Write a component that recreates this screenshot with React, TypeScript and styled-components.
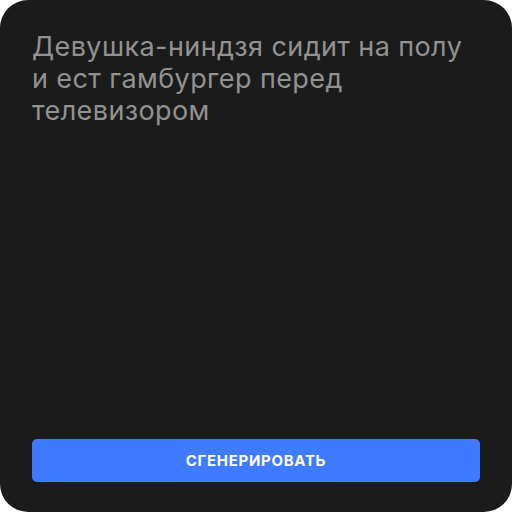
import React from "react";
import styled, { createGlobalStyle } from "styled-components";

const GlobalStyle = createGlobalStyle`
    html, body {
        margin: 0;
        padding: 0;
        background: #ffffff;
    }
    * {
        box-sizing: border-box;
    }
`

export default function App() {
    return (
        <>
            <GlobalStyle />
            <Card>
                <Prompt>Девушка-ниндзя сидит на полу и ест гамбургер перед телевизором</Prompt>
                <GenerateButton type="button">Сгенерировать</GenerateButton>
            </Card>
        </>
    );
}

const Card = styled.div`
    width: 512px;
    height: 512px;
    background: #1b1b1b;
    border-radius: 28px;
    padding: 31px 32px 30px 32px;
    display: flex;
    flex-direction: column;
    justify-content: space-between;
`

const Prompt = styled.p`
    margin: 0;
    font-family: Inter, "Noto Sans", sans-serif;
    font-size: 27px;
    line-height: 32px;
    color: #929292;
    letter-spacing: 0.4px;
`

const GenerateButton = styled.button`
    width: 100%;
    height: 43px;
    border: none;
    border-radius: 5px;
    background: #3f7bfe;
    color: #ffffff;
    font-family: Inter, "Noto Sans", sans-serif;
    font-size: 15px;
    font-weight: 700;
    letter-spacing: 0.7px;
    text-transform: uppercase;
    cursor: pointer;
`
